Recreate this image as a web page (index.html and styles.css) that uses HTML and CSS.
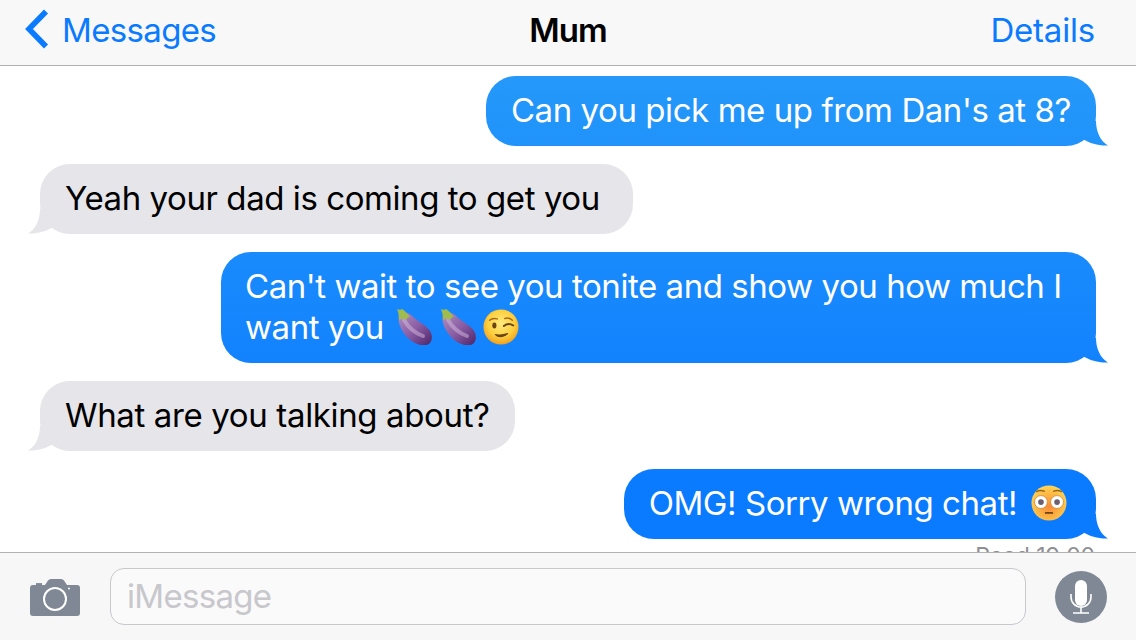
FILE: index.html
```html
<!DOCTYPE html>
<html>
<head>
	<meta http-equiv="Content-Type" content="text/html; charset=utf-8" />
	<title>Mum</title>
	<link rel="stylesheet" href="styles.css">
</head>
<body>
	<svg class="defs" width="0" height="0">
		<defs>
			<linearGradient id="eggBody" x1="0" y1="0" x2="1" y2="1">
				<stop offset="0" stop-color="#b08fc0"/>
				<stop offset="0.5" stop-color="#8a5da4"/>
				<stop offset="1" stop-color="#4d2468"/>
			</linearGradient>
			<radialGradient id="faceSkin" cx="0.5" cy="0.4" r="0.62">
				<stop offset="0" stop-color="#ffeb80"/>
				<stop offset="0.6" stop-color="#fdd03e"/>
				<stop offset="1" stop-color="#f09c1c"/>
			</radialGradient>
			<radialGradient id="flushSkin" cx="0.5" cy="0.6" r="0.62">
				<stop offset="0" stop-color="#fb8a3a"/>
				<stop offset="0.55" stop-color="#fcb544"/>
				<stop offset="1" stop-color="#fdd858"/>
			</radialGradient>
			<symbol id="egg" viewBox="0 0 36 36">
				<path d="M3 6C1 14 6 23 12 29C18 35 27 38 32 35.500C37 33 37 25 33 20.500C27 14 21 12 15 6C11 3 5 2 3 6Z" fill="url(#eggBody)"/>
				<path d="M8 11C12 18 19 24 27 27" fill="none" stroke="#d3bcdd" stroke-width="4" stroke-linecap="round" opacity=".5"/>
				<path d="M1 0C3 1 5 1 6 0C8 1 10 3 14 8C12 8 11 9 10 11C8 9 6 10 3 11C3 8 3 5 1 0Z" fill="#a0bb4e"/>
			</symbol>
		</defs>
	</svg>

	<div class="screen">
		<header class="nav">
			<a class="nav-back">
				<svg class="chevron" width="26" height="42" viewBox="0 0 26 42"><path d="M22 3.500L5 21L22 38.500" fill="none" stroke="#0a7aff" stroke-width="5.600"/></svg>
				Messages
			</a>
			<div class="nav-title">Mum</div>
			<a class="nav-details">Details</a>
		</header>

		<main class="chat">
			<div class="bubble sent">Can you pick me up from Dan's at 8?<i class="tail"></i></div>
			<div class="bubble received long-end">Yeah your dad is coming to get you<i class="tail"></i></div>
			<div class="bubble sent wide">Can't wait to see you tonite and show you how much I want you
				<svg class="emoji egg-first" width="36" height="36"><use href="#egg"/></svg><svg class="emoji egg-next" width="36" height="36"><use href="#egg"/></svg><svg class="emoji face" width="36" height="36" viewBox="0 0 38 38">
					<circle cx="19" cy="19" r="18.500" fill="url(#faceSkin)"/>
					<ellipse cx="12" cy="17.500" rx="2.200" ry="3.200" fill="#6b4513"/>
					<path d="M22 18C25 15.500 29 15.500 32 17.500" fill="none" stroke="#6b4513" stroke-width="2" stroke-linecap="round"/>
					<path d="M7 12C9 10 12 9.500 15 10.500M23 10C26 9 29 10 31 12" fill="none" stroke="#a8691a" stroke-width="1.500" stroke-linecap="round"/>
					<path d="M13 27C16 30 22 30 26 26C22 27.500 17 28 13 27Z" fill="#6b4513" stroke="#6b4513" stroke-width="1.200" stroke-linejoin="round"/>
				</svg>
				<i class="tail"></i>
			</div>
			<div class="bubble received loose">What are you talking about?<i class="tail"></i></div>
			<div class="bubble sent">OMG! Sorry wrong chat!
				<svg class="emoji flushed" width="36" height="36" viewBox="0 0 38 38">
					<circle cx="19" cy="19" r="18.500" fill="url(#flushSkin)"/>
					<circle cx="10.500" cy="18" r="6.800" fill="#fff" stroke="#b7791f" stroke-width=".7"/>
					<circle cx="27.500" cy="18" r="6.800" fill="#fff" stroke="#b7791f" stroke-width=".7"/>
					<circle cx="10.500" cy="18" r="3" fill="#6a6070"/>
					<circle cx="27.500" cy="18" r="3" fill="#6a6070"/>
					<path d="M6 7C8 5.500 11 5.500 14 6.500M24 6.500C27 5.500 30 5.500 32 7" fill="none" stroke="#9a6418" stroke-width="1.500" stroke-linecap="round"/>
					<path d="M15.500 29.500H22.500" stroke="#6b4513" stroke-width="1.800" stroke-linecap="round"/>
				</svg>
				<i class="tail"></i>
			</div>
			<div class="read">Read 19:00</div>
		</main>

		<footer class="compose">
			<svg class="camera" width="50" height="38" viewBox="0 0 50 38">
				<path d="M3 7H6V5H12V7H15L18 2.500Q19 1 21 1H31Q33 1 34 2.500L37 7H47Q50 7 50 10V35Q50 38 47 38H3Q0 38 0 35V10Q0 7 3 7Z" fill="#7f8894"/>
				<path d="M6 4.500H12" stroke="#f7f7f8" stroke-width="1.200"/>
				<circle cx="25" cy="21" r="11" fill="none" stroke="#fff" stroke-width="2"/>
				<circle cx="39" cy="10.500" r="1" fill="#fff"/>
			</svg>
			<div class="compose-input">iMessage</div>
			<div class="mic">
				<svg width="22" height="34" viewBox="0 0 22 34">
					<rect x="5" y="0" width="12" height="26" rx="6" fill="#fff"/>
					<path d="M1 14V17A10 10 0 0 0 21 17V14M11 27V33M3 33H19" fill="none" stroke="#fff" stroke-width="1.600"/>
				</svg>
			</div>
		</footer>
	</div>
</body>
</html>
```

FILE: styles.css
```css
*{margin: 0;padding: 0;box-sizing: border-box;}
html,body{ width: 100%; height: 100%; background: #fff; overflow: hidden; }
body{ font-family: "Inter", "Liberation Sans", sans-serif; font-size: 33px; letter-spacing: -0.43px; }
.defs{ position: absolute; }
.screen{ display: flex; flex-direction: column; height: 640px; }

.nav{ flex: none; display: grid; grid-template-columns: 1fr auto 1fr; align-items: center; height: 66px; padding: 0 41px 6px; background: #f8f8f8; border-bottom: 1px solid #b2b2b2; color: #0a7aff; letter-spacing: -0.65px; }
.nav-back{ display: flex; align-items: center; gap: 12px; margin-left: -17px; }
.chevron{ flex: none; margin-top: -2px; }
.nav-title{ color: #000; font-weight: 600; letter-spacing: -0.9px; }
.nav-details{ justify-self: end; letter-spacing: -0.2px; }

.chat{ flex: 1; min-height: 0; overflow: hidden; display: flex; flex-direction: column; gap: 18px; padding: 10px 40px 0; }
.bubble{ position: relative; flex: none; max-width: 875px; padding: 14px 25px 15px; line-height: 41px; border-radius: 30px; }
.bubble.sent{ align-self: flex-end; color: #fff; background: linear-gradient(#2598fa 76px, #0a7aff 480px) fixed; }
.bubble.received{ align-self: flex-start; color: #000; background: #e5e5ea; }
.bubble.wide{ padding-left: 24px; padding-right: 26px; letter-spacing: -0.45px; }
.bubble.long-end{ padding-right: 33px; }
.bubble.loose{ letter-spacing: -0.36px; }
.tail{ position: absolute; bottom: 0; width: 32px; height: 25px; }
.sent .tail{ right: -12px; background: linear-gradient(#2598fa 76px, #0a7aff 480px) fixed; clip-path: path("M20 0C20 10 24 20 32 24.500C23 25 14 22.500 7 18L0 0Z"); }
.received .tail{ left: -12px; background: #e5e5ea; clip-path: path("M12 0C12 10 8 20 0 24.500C9 25 18 22.500 25 18L32 0Z"); }
.read{ align-self: flex-end; margin-top: -15px; padding-right: 1px; font-size: 23px; letter-spacing: -0.1px; color: #8e8e93; }

.emoji{ vertical-align: -6px; }
.egg-first{ margin-left: 3px; }
.egg-next{ margin-left: 8px; }
.face{ margin-left: 7px; }
.flushed{ margin-left: 5px; margin-right: 4px; }

.compose{ flex: none; display: flex; align-items: center; height: 88px; padding: 0 29px 0 30px; background: #f7f7f8; border-top: 1px solid #b2b2b2; }
.camera{ flex: none; }
.compose-input{ flex: 1; height: 57px; margin: 0 29px 0 30px; padding-left: 16px; line-height: 55px; color: #c7c7cc; background: #fafafb; border: 1px solid #c8c8cc; border-radius: 14px; letter-spacing: -0.7px; }
.mic{ flex: none; display: flex; align-items: center; justify-content: center; width: 52px; height: 52px; border-radius: 50%; background: #7f8894; }
```
